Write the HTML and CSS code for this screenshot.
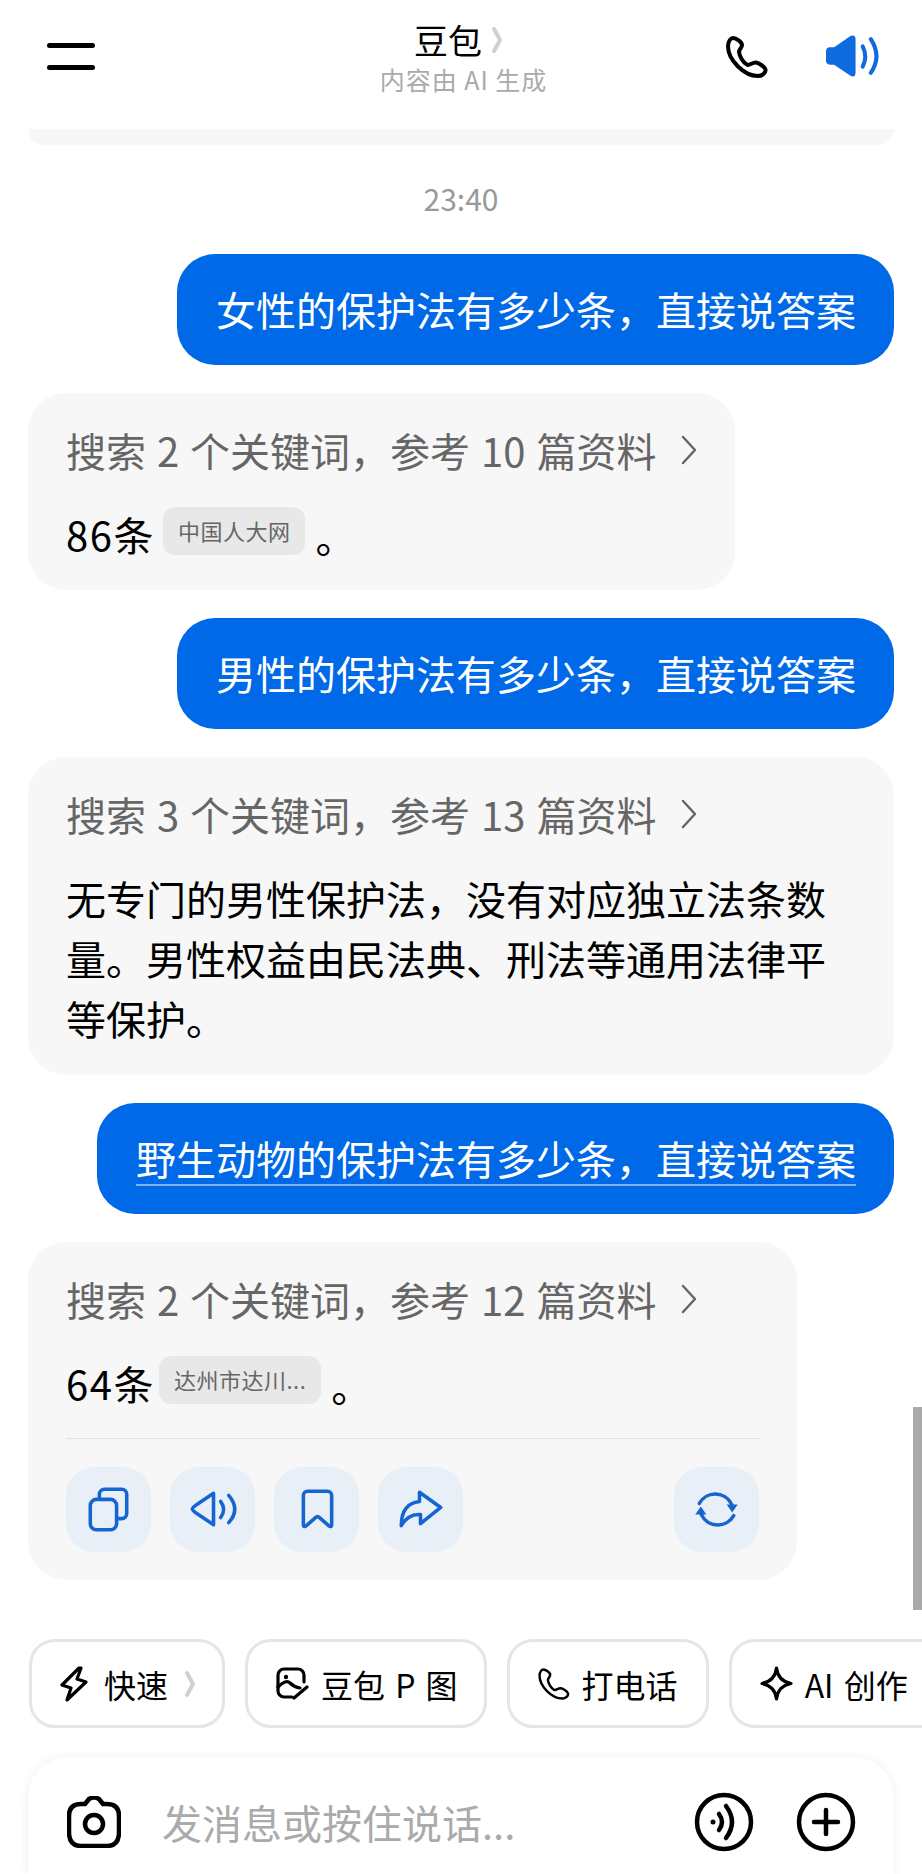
FILE: index.html
```html
<!DOCTYPE html>
<html lang="zh-CN">
<head>
    <meta charset="UTF-8">
    <meta name="viewport" content="width=device-width, initial-scale=1.0">
    <title>豆包</title>
    <link rel="stylesheet" href="styles.css">
</head>
<body>
<div class="page">
    <header class="topbar">
        <div class="menu-btn"><span></span><span></span></div>
        <div class="title-wrap">
            <div class="title-row">
                <span class="title">豆包</span>
                <svg class="soft-arrow" viewBox="0 0 12 28"><path d="M3 3L9 14L3 25"/></svg>
            </div>
            <div class="subtitle">内容由 AI 生成</div>
        </div>
        <div class="top-actions">
            <svg class="icon-phone" viewBox="0 0 42 42"><path d="M7 2C5 2 2 5 2 10C2 24 18 40 32 40C36 40 40 37 39.5 33.5C39 31 33 27 30 26.5C27 26 24 29.5 21.5 29C17 27 13.5 20 13 16C13 13 16 12 16 9C16 6 10 2 7 2Z"/></svg>
            <svg class="icon-speaker" viewBox="0 0 53 42">
                <path class="solid" d="M4 12H8L24 1Q29-1 29 4V37Q29 42 24 40L8 29H4Q0 29 0 25V16Q0 12 4 12Z"/>
                <path d="M36 11Q41 21 36 31"/>
                <path d="M44 4Q55 21 44 37"/>
            </svg>
        </div>
    </header>

    <main class="messages">
        <div class="prev-card"></div>
        <div class="time">23:40</div>

        <div class="bubble">女性的保护法有多少条，直接说答案</div>

        <div class="card">
            <div class="search-head">
                <span>搜索 2 个关键词，参考 10 篇资料</span>
                <svg class="head-arrow" viewBox="0 0 16 30"><path d="M2 2L14 15L2 28"/></svg>
            </div>
            <div class="answer-line">
                <span>86条</span>
                <span class="source">中国人大网</span>
                <span class="stop">。</span>
            </div>
        </div>

        <div class="bubble">男性的保护法有多少条，直接说答案</div>

        <div class="card card-wide">
            <div class="search-head">
                <span>搜索 3 个关键词，参考 13 篇资料</span>
                <svg class="head-arrow" viewBox="0 0 16 30"><path d="M2 2L14 15L2 28"/></svg>
            </div>
            <p class="answer">无专门的男性保护法，没有对应独立法条数量。男性权益由民法典、刑法等通用法律平等保护。</p>
        </div>

        <div class="bubble"><span class="selected">野生动物的保护法有多少条，直接说答案</span></div>

        <div class="card card-last">
            <div class="search-head">
                <span>搜索 2 个关键词，参考 12 篇资料</span>
                <svg class="head-arrow" viewBox="0 0 16 30"><path d="M2 2L14 15L2 28"/></svg>
            </div>
            <div class="answer-line">
                <span>64条</span>
                <span class="source source-tight">达州市达川...</span>
                <span class="stop">。</span>
            </div>
            <div class="tools">
                <div class="tool">
                    <svg viewBox="0 0 84 84">
                        <rect x="24" y="32" width="26" height="30" rx="6"/>
                        <path d="M33 31V27a5 5 0 0 1 5-5h17a5 5 0 0 1 5 5v19a5 5 0 0 1-5 5h-5"/>
                    </svg>
                </div>
                <div class="tool">
                    <svg viewBox="0 0 84 84">
                        <path d="M43 26L28 36Q22 40 22 41.5Q22 43 28 47L43 57Z"/>
                        <path d="M50 34Q56 42 50 50"/>
                        <path d="M58 28Q70 42 58 55"/>
                    </svg>
                </div>
                <div class="tool">
                    <svg viewBox="0 0 84 84">
                        <path d="M33 24H53a4 4 0 0 1 4 4V57Q57 60 54 58L45 50Q43 48 41 50L32 58Q29 60 29 57V28a4 4 0 0 1 4-4Z"/>
                    </svg>
                </div>
                <div class="tool">
                    <svg viewBox="0 0 84 84">
                        <path d="M41 25L62 40L42 56V47Q30 46 23 58Q23 36 41 34Z"/>
                    </svg>
                </div>
                <div class="tool tool-right">
                    <svg viewBox="0 0 84 84">
                        <path d="M25 36A18 18 0 0 1 57 37"/>
                        <path class="solid" d="M52 37H63L57.5 45Z"/>
                        <path d="M59 48A18 18 0 0 1 27 47"/>
                        <path class="solid" d="M21 47H32L26.5 39Z"/>
                    </svg>
                </div>
            </div>
        </div>
    </main>

    <div class="shortcuts">
        <div class="shortcut shortcut-first">
            <svg class="sc-icon" width="28" height="36" viewBox="0 0 28 36"><path d="M19 2L2 19L11 22L7 34L26 16L17 13L21 2Z"/></svg>
            <span>快速</span>
            <svg class="soft-arrow" viewBox="0 0 12 28"><path d="M3 3L9 14L3 25"/></svg>
        </div>
        <div class="shortcut">
            <svg class="sc-icon" width="33" height="33" viewBox="0 0 33 33">
                <path d="M16 30H8a6 6 0 0 1-6-6V8a6 6 0 0 1 6-6H22a6 6 0 0 1 6 6V15"/>
                <path d="M2 20Q10 12 14 16T24 21"/>
                <path d="M18 31L31 20"/>
                <circle class="solid" cx="10" cy="10" r="2.2"/>
            </svg>
            <span>豆包 P 图</span>
        </div>
        <div class="shortcut shortcut-call">
            <svg class="sc-icon" width="32" height="32" viewBox="0 0 42 42"><path d="M7 2C5 2 2 5 2 10C2 24 18 40 32 40C36 40 40 37 39.5 33.5C39 31 33 27 30 26.5C27 26 24 29.5 21.5 29C17 27 13.5 20 13 16C13 13 16 12 16 9C16 6 10 2 7 2Z"/></svg>
            <span>打电话</span>
        </div>
        <div class="shortcut shortcut-last">
            <svg class="sc-icon" width="33" height="35" viewBox="0 0 33 35"><path d="M16.5 2Q18 15 31 17.5Q18 20 16.5 33Q15 20 2 17.5Q15 15 16.5 2Z"/></svg>
            <span>AI 创作</span>
        </div>
    </div>

    <div class="inputbar">
        <svg class="input-camera" viewBox="0 0 54 52">
            <path d="M18 8L22 3Q27 0 32 3L36 8H40Q52 8 52 20V36Q52 50 40 50H14Q2 50 2 36V20Q2 8 14 8Z"/>
            <circle cx="27" cy="28" r="9"/>
        </svg>
        <span class="placeholder">发消息或按住说话...</span>
        <svg class="input-round" viewBox="0 0 60 60">
            <circle cx="30" cy="30" r="27"/>
            <circle class="solid" cx="19" cy="30" r="2.5"/>
            <path d="M25 22Q31 30 25 38"/>
            <path d="M32 14Q44 30 32 46"/>
        </svg>
        <svg class="input-round" viewBox="0 0 60 60">
            <circle cx="30" cy="30" r="27"/>
            <path d="M18 30H42M30 18V42"/>
        </svg>
    </div>

    <div class="scroll-thumb"></div>
</div>
</body>
</html>
```

FILE: styles.css
```css
* {
    box-sizing: border-box;
}
body {
    margin: 0;
    background-color: #fff;
    color: #000;
    font-family: "Noto Sans CJK SC", "Noto Sans", sans-serif;
}
svg {
    display: block;
    flex: none;
    fill: none;
    stroke-linecap: round;
    stroke-linejoin: round;
}
svg .solid {
    stroke: none;
}

.page {
    position: relative;
    display: flex;
    flex-direction: column;
    width: 922px;
    height: 1874px;
    overflow: hidden;
}

/* top bar */
.topbar {
    display: grid;
    grid-template-columns: 1fr auto 1fr;
    align-items: center;
    flex: none;
    height: 129px;
    padding: 0 42px 16px 47px;
}
.menu-btn {
    display: flex;
    flex-direction: column;
    gap: 17px;
    width: 48px;
}
.menu-btn span {
    height: 5px;
    border-radius: 3px;
    background-color: #000;
}
.title-wrap {
    text-align: center;
}
.title-row {
    display: flex;
    align-items: center;
    justify-content: center;
    gap: 9px;
    height: 42px;
    padding-right: 10px;
}
.title {
    font-size: 34px;
    line-height: 42px;
}
.soft-arrow {
    width: 12px;
    height: 28px;
    stroke: #d0d0d0;
    stroke-width: 4;
}
.subtitle {
    margin-top: 3px;
    font-size: 25px;
    letter-spacing: 1px;
    line-height: 30px;
    color: #aaa;
}
.top-actions {
    display: flex;
    align-items: center;
    justify-content: flex-end;
    gap: 58px;
}
.icon-phone {
    width: 42px;
    height: 42px;
    stroke: #000;
    stroke-width: 4;
}
.icon-speaker {
    width: 54px;
    height: 43px;
    stroke: #0f6be0;
    stroke-width: 4;
}
.icon-speaker .solid {
    fill: #0f6be0;
}

/* messages */
.messages {
    flex: 1;
    display: flex;
    flex-direction: column;
    gap: 28px;
    padding: 0 28px;
    min-height: 0;
}
.prev-card {
    height: 16px;
    border-radius: 0 0 30px 30px;
    background-color: #f7f7f7;
}
.time {
    margin: 10px 0 13px;
    font-size: 30px;
    line-height: 30px;
    text-align: center;
    color: #999;
}
.bubble {
    align-self: flex-end;
    padding: 0 38px 0 39px;
    height: 111px;
    border-radius: 38px;
    background-color: #0069e8;
    color: #fff;
    font-size: 40px;
    line-height: 110px;
    white-space: nowrap;
}
.selected {
    text-decoration: underline;
    text-decoration-color: #7fb2f2;
    text-decoration-thickness: 2px;
    text-decoration-skip-ink: none;
    text-underline-offset: 9px;
}
.card {
    align-self: flex-start;
    padding: 27px 38px;
    border-radius: 38px;
    background-color: #f7f7f7;
}
.card-wide {
    align-self: stretch;
}
.card-last {
    width: 769px;
    padding-bottom: 28px;
}
.search-head {
    display: flex;
    align-items: center;
    gap: 25px;
    height: 60px;
    margin-bottom: 24px;
    font-size: 40px;
    word-spacing: 2px;
    color: #666;
    white-space: nowrap;
}
.head-arrow {
    width: 16px;
    height: 30px;
    stroke: #666;
    stroke-width: 2.5;
}
.answer-line {
    display: flex;
    align-items: center;
    height: 59px;
    font-size: 40px;
    letter-spacing: 1.5px;
}
.answer {
    margin: 0;
    font-size: 40px;
    line-height: 60px;
}
.source {
    margin: 0 10px 6px 8px;
    padding: 0 15px;
    height: 48px;
    border-radius: 12px;
    background-color: #e8e8e8;
    color: #666;
    font-size: 22px;
    letter-spacing: 0.5px;
    line-height: 46px;
}
.source-tight {
    margin-left: 4px;
}
.stop {
    margin-top: 4px;
}
.tools {
    display: flex;
    gap: 19px;
    margin-top: 26px;
    padding-top: 28px;
    border-top: 1px solid #e2e2e2;
}
.tool {
    width: 85px;
    height: 85px;
    border-radius: 28px;
    background-color: #e9eff7;
}
.tool svg {
    stroke: #1565d0;
    stroke-width: 3.5;
}
.tool .solid {
    fill: #1565d0;
}
.tool-right {
    margin-left: auto;
}

/* shortcuts */
.shortcuts {
    display: flex;
    flex: none;
    gap: 20px;
    padding-left: 29px;
    margin-bottom: 29px;
}
.shortcut {
    display: flex;
    flex: none;
    align-items: center;
    gap: 12px;
    height: 89px;
    padding: 0 26px 0 28px;
    border: 3px solid #e5e5e5;
    border-radius: 26px;
    font-size: 32px;
    word-spacing: 3px;
    white-space: nowrap;
}
.shortcut-first {
    gap: 16px;
}
.shortcut-call {
    padding-right: 28px;
}
.shortcut-last {
    padding-right: 60px;
}
.sc-icon {
    stroke: #000;
    stroke-width: 3.2;
}
.sc-icon .solid {
    fill: #000;
}

/* input */
.inputbar {
    display: flex;
    flex: none;
    align-items: center;
    height: 117px;
    margin: 0 28px;
    padding: 13px 38px 0 39px;
    border-radius: 40px 40px 0 0;
    background-color: #fff;
    box-shadow: 0 0 10px rgba(0, 0, 0, 0.07);
}
.input-camera {
    width: 54px;
    height: 52px;
    stroke: #000;
    stroke-width: 4.5;
}
.placeholder {
    flex: 1;
    margin-left: 41px;
    font-size: 40px;
    color: #aaa;
}
.input-round {
    width: 60px;
    height: 60px;
    margin-left: 42px;
    stroke: #000;
    stroke-width: 4.5;
}
.input-round .solid {
    fill: #000;
}

.scroll-thumb {
    position: absolute;
    top: 1407px;
    right: 0;
    width: 9px;
    height: 203px;
    background-color: #aaa;
}
```
